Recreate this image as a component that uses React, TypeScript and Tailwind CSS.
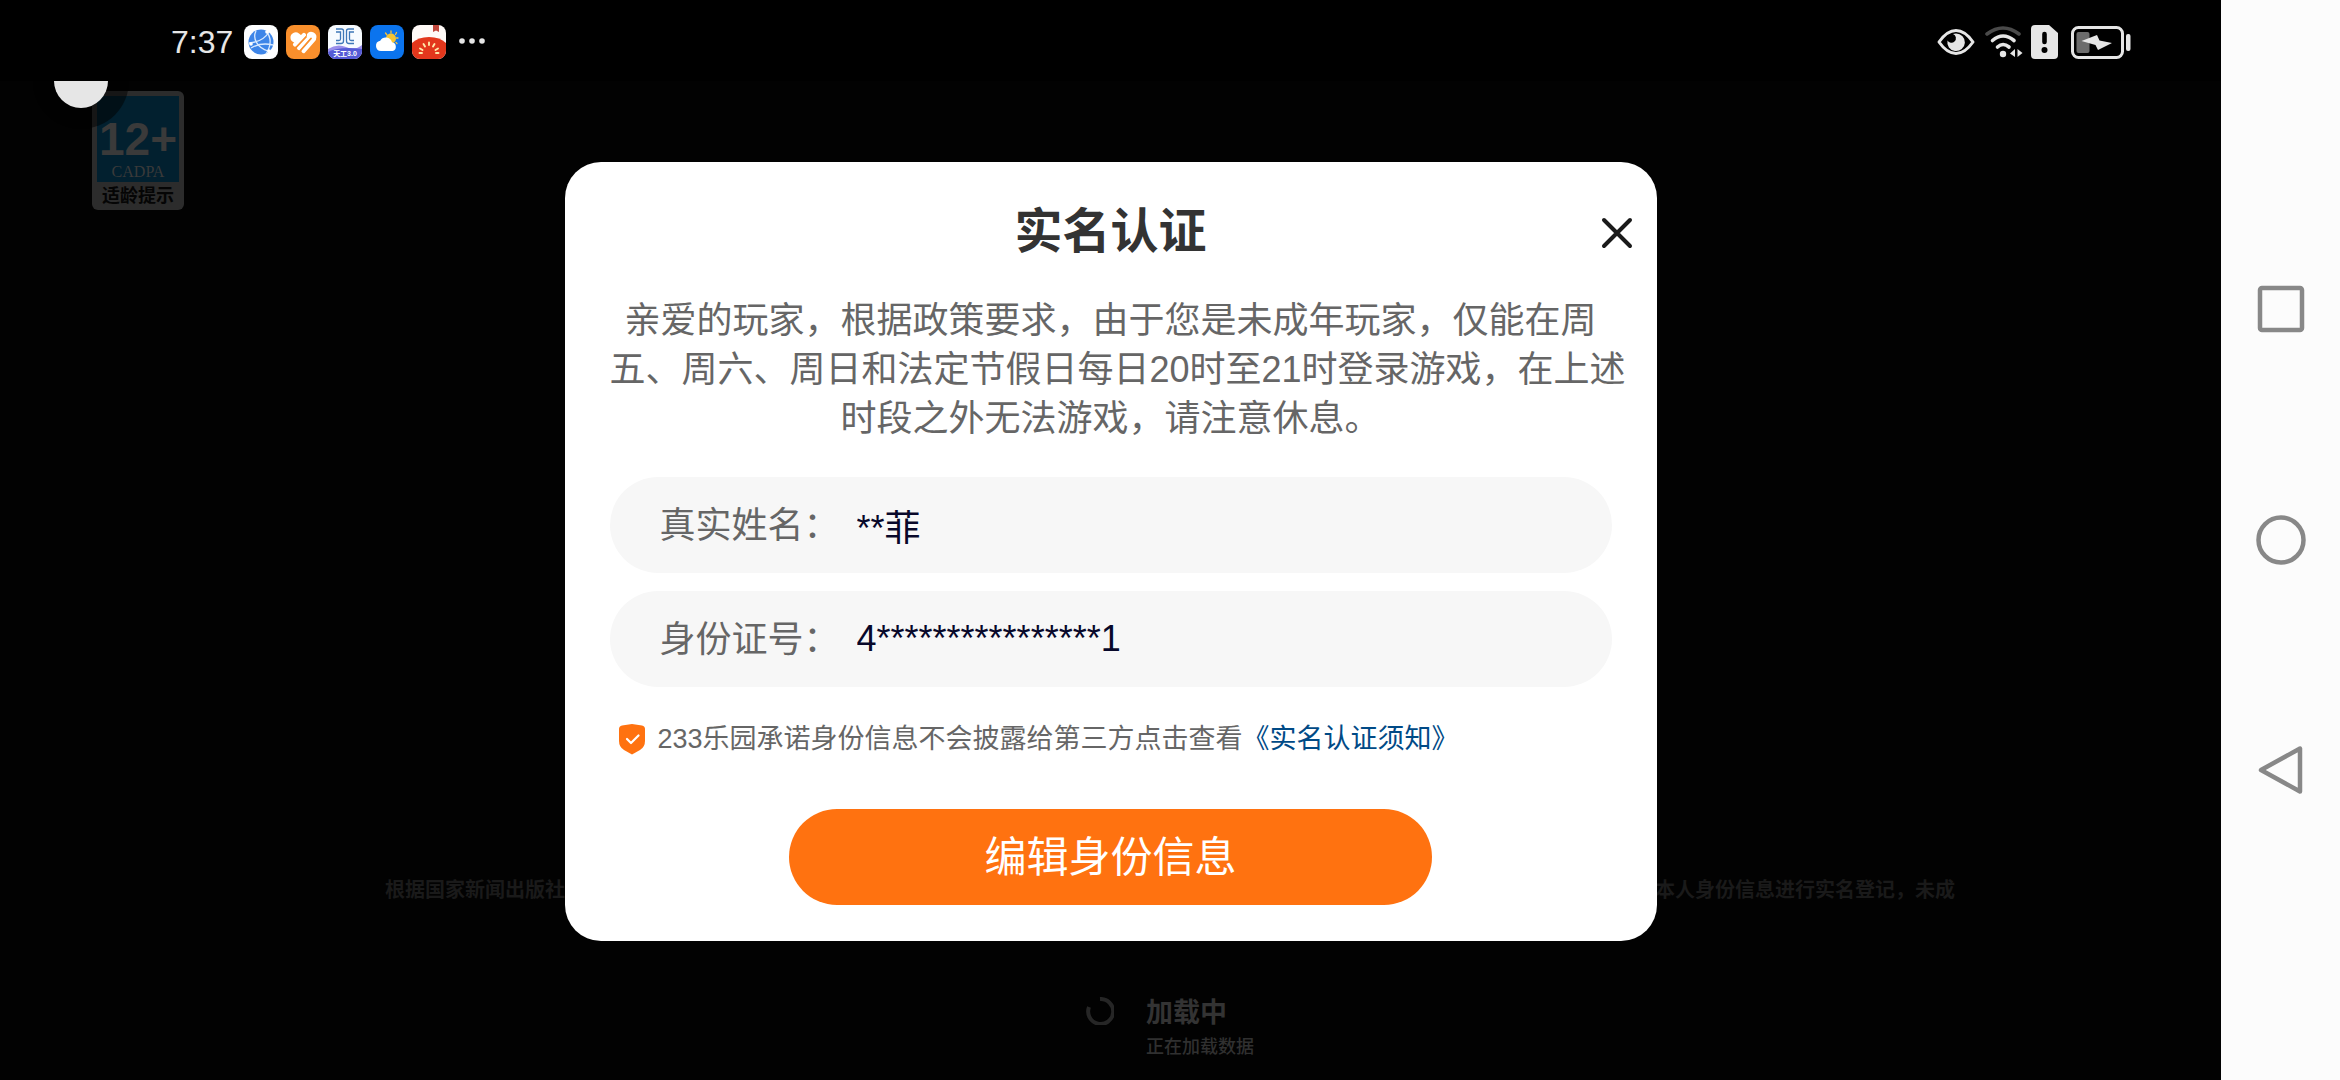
import { useState } from 'react';

const appIcons = [
  {
    name: '浏览器',
    art: (
      <>
        <rect width="34" height="34" rx="8" fill="#fdfeff" />
        <circle cx="17" cy="17" r="12.5" fill="#3d85e8" />
        <g fill="none" stroke="#d9eaff" strokeWidth="1.3">
          <path d="M5 18Q19 17 25 7" />
          <path d="M12 6C8 14 14 23 24 26" />
          <path d="M22 6C28 13 27 21 22 29" />
          <path d="M7 23Q17 17 29 20" />
        </g>
        <circle cx="23" cy="7" r="1.8" fill="#fff" />
        <circle cx="7" cy="19" r="1.8" fill="#fff" />
        <circle cx="25" cy="26" r="1.8" fill="#fff" />
      </>
    ),
  },
  {
    name: '运动健康',
    art: (
      <>
        <rect width="34" height="34" rx="8" fill="#f98f2c" />
        <path d="M4.5 13A5.2 5.2 0 0 1 13 8.5L15.5 10.5L8.5 17.5Q4.5 16 4.5 13z" fill="#fff" />
        <g fill="none" stroke="#fff" strokeWidth="4.2" strokeLinecap="round">
          <path d="M9 19.5L18 10" />
          <path d="M13 23L24 10.5" />
          <path d="M17.5 26L28 14" />
        </g>
        <path d="M21 9A5.2 5.2 0 0 1 30 14L26 14L21 12z" fill="#fff" />
        <path d="M10.500 22L20 12M14.5 25.5L25 13.5" stroke="#f98f2c" strokeWidth="1.8" strokeLinecap="round" />
      </>
    ),
  },
  {
    name: '天工',
    art: (
      <>
        <clipPath id="tg"><rect width="34" height="34" rx="8" /></clipPath>
        <g clipPath="url(#tg)">
          <rect width="34" height="34" fill="#f7fbff" />
          <g fill="none" stroke="#3f78b8" strokeWidth="1.3">
            <path d="M8 4H13.500Q15.500 4 15.500 6V16Q15.500 18.500 13 18.500H8" />
            <path d="M26 4H20.500Q18.500 4 18.500 6V16Q18.500 18.500 21 18.500H26" />
            <path d="M8 7H12.500V14Q12.500 15.500 11 15.500H8" />
            <path d="M26 7H21.500V14Q21.500 15.500 23 15.500H26" />
          </g>
          <path d="M0 24Q9 18 18 22T34 20V34H0z" fill="#9a8eea" />
          <path d="M0 27Q12 21 34 24V34H0z" fill="#555bd6" />
        </g>
        <text x="17" y="31" textAnchor="middle" fontSize="7" fontWeight="700" fill="#fff" fontFamily="'Liberation Sans', 'Noto Sans CJK SC', sans-serif">天工3.0</text>
      </>
    ),
  },
  {
    name: '天气',
    art: (
      <>
        <rect width="34" height="34" rx="8" fill="#0b74ee" />
        <g stroke="#f8c23c" strokeWidth="1.3" strokeLinecap="round">
          <path d="M21 6V8M26.5 7.5L25.5 9.5M15.5 8L17 10M28 13H26.5M27 18.5L26 17.5" />
        </g>
        <circle cx="21" cy="13.5" r="5" fill="#f8c531" />
        <path d="M11 26a5.2 5.2 0 0 1-.8-10.3A6.5 6.5 0 0 1 22 17.2a4.5 4.5 0 0 1 .5 8.8z" fill="#fff" />
      </>
    ),
  },
  {
    name: '番茄小说',
    art: (
      <>
        <clipPath id="fq"><rect width="34" height="34" rx="8" /></clipPath>
        <g clipPath="url(#fq)">
          <rect width="34" height="34" fill="#fffaf7" />
          <path d="M21 0H27V7L24 5.5L21 7z" fill="#c0473c" />
          <path d="M0 18Q6 12 17 12T34 18V34H0z" fill="#e3371c" />
          <g stroke="#ffe9a8" strokeWidth="1.9" strokeLinecap="round">
            <path d="M17 17.5V20M11.5 19L13 21.5M22.5 19L21 21.5M8 23.5L10.5 25M26 23.5L23.5 25M7.5 28H10M24 28H26.5" />
          </g>
        </g>
      </>
    ),
  },
];

function StatusBar() {
  return (
    <header className="flex h-[81px] items-center justify-between bg-black pt-[3px] pr-[90px] pl-[171px]">
      <div className="flex items-center gap-2">
        <time className="mr-[3px] font-['Liberation_Sans',sans-serif] text-[32px] leading-10 text-[#e6e6e6]">7:37</time>
        {appIcons.map((icon) => (
          <svg key={icon.name} role="img" aria-label={icon.name} viewBox="0 0 34 34" className="size-[34px]">
            {icon.art}
          </svg>
        ))}
        <svg viewBox="0 0 28 8" className="ml-1 h-2 w-7" fill="#e6e6e6" aria-hidden="true">
          <circle cx="4" cy="3" r="2.8" />
          <circle cx="14" cy="3" r="2.8" />
          <circle cx="24" cy="3" r="2.8" />
        </svg>
      </div>

      <div className="flex items-center">
        <svg viewBox="0 0 38 28" className="mr-[10px] h-7 w-[38px]" aria-hidden="true">
          <path d="M2 14Q10 2.5 19 2.5T36 14Q28 25.5 19 25.5T2 14z" fill="none" stroke="#e6e6e6" strokeWidth="3" strokeLinejoin="round" />
          <path d="M19 5.5A8.8 8.8 0 1 1 10.5 12.5A4.5 4.5 0 0 0 17.5 13.5A4.5 4.5 0 0 0 16 6z" fill="#e6e6e6" />
        </svg>
        <svg viewBox="0 0 38 34" className="mr-2 h-[34px] w-[38px]" fill="none" strokeLinecap="round" strokeWidth="3.6" aria-hidden="true">
          <path d="M2 9Q18 -3 34 9" stroke="#4a4a4a" />
          <path d="M7.5 15.5Q18 6.5 29 15.5" stroke="#e6e6e6" />
          <path d="M12.5 22Q18 17 24 22" stroke="#e6e6e6" />
          <circle cx="18" cy="29" r="3.2" fill="#e6e6e6" />
          <path d="M30 24V32L25 28.5zM32.5 24V32L37.5 28z" fill="#e6e6e6" />
        </svg>
        <svg viewBox="0 0 27 34" className="mr-[13px] h-[34px] w-[27px]" aria-hidden="true">
          <path d="M4 0H18L27 8V30a4 4 0 0 1-4 4H4a4 4 0 0 1-4-4V4a4 4 0 0 1 4-4z" fill="#e6e6e6" />
          <path d="M13.5 9V17" stroke="#000" strokeWidth="4.6" strokeLinecap="round" />
          <circle cx="13.5" cy="25" r="3" fill="#000" />
        </svg>
        <svg viewBox="0 0 60 34" className="h-[34px] w-[60px]" aria-hidden="true">
          <rect x="1.5" y="2.5" width="50" height="30" rx="6" fill="none" stroke="#e6e6e6" strokeWidth="3" />
          <rect x="5.5" y="7" width="13" height="21" rx="2" fill="#6c6c6c" />
          <path d="M10.5 16L26 10L28.5 15.5L41 18L27 25L24.5 20z" fill="#e6e6e6" />
          <rect x="55" y="9" width="4.5" height="17" rx="2" fill="#e6e6e6" />
        </svg>
      </div>
    </header>
  );
}

function AgeBadge() {
  return (
    <div className="flex h-[119px] w-[92px] flex-col overflow-hidden rounded-md bg-[#2c2c2c] p-[5px] pb-1 text-center">
      <div className="flex h-[86px] shrink-0 flex-col items-center justify-end bg-[#02202f] text-[#3a3a3a]">
        <span className="font-['Liberation_Sans',sans-serif] text-[46px] leading-[46px] font-bold">12+</span>
        <span className="font-['Liberation_Serif',serif] text-base leading-5">CADPA</span>
      </div>
      <span className="font-['Noto_Sans_CJK_SC',sans-serif] text-lg leading-6 font-bold text-[#050505]">适龄提示</span>
    </div>
  );
}

export default function App() {
  const [open, setOpen] = useState(true);
  const [realName, setRealName] = useState('**菲');
  const [idNumber, setIdNumber] = useState('4****************1');
  const [editing, setEditing] = useState(false);

  const fields = [
    { id: 'real-name', label: '真实姓名：', value: realName, onChange: setRealName },
    { id: 'id-number', label: '身份证号：', value: idNumber, onChange: setIdNumber },
  ];

  return (
    <div className="flex min-h-screen bg-[#020202]">
      <div className="flex min-w-0 flex-1 flex-col">
        <StatusBar />

        <main className="relative flex flex-1 flex-col justify-between overflow-hidden">
          <div className="pt-[10px] pl-[92px]">
            <AgeBadge />
          </div>

          {/* Floating assistant ball */}
          <div className="absolute -top-12 left-[33px] flex size-24 items-center justify-center rounded-full bg-black/50">
            <div className="size-[54px] rounded-full bg-[#e6e6e6]" />
          </div>

          {/* Loading screen */}
          <div className="flex flex-col items-center pb-[23px] pl-[119px] font-['Noto_Sans_CJK_SC',sans-serif]">
            <p className="mb-[90px] flex w-full max-w-[1570px] justify-between text-xl leading-7 font-bold text-[#1a1a1a]">
              <span>根据国家新闻出版社</span>
              <span>用本人身份信息进行实名登记，未成</span>
            </p>
            <div className="flex gap-8">
              <svg viewBox="0 0 28 28" className="mt-1 size-7" fill="none" aria-hidden="true">
                <path d="M14 2A12.5 12.5 0 1 1 3 10" stroke="#262626" strokeWidth="4" />
              </svg>
              <div className="flex flex-col gap-1">
                <p className="text-[27px] leading-9 font-bold text-[#333333]">加载中</p>
                <p className="text-lg leading-6 font-medium text-[#303030]">正在加载数据</p>
              </div>
            </div>
          </div>

          {/* Real-name dialog */}
          {open && (
            <div className="absolute inset-0 flex items-start justify-center pt-[81px] font-['Liberation_Sans','Noto_Sans_CJK_SC',sans-serif]">
              <section
                role="dialog"
                aria-labelledby="dialog-title"
                className="relative w-full max-w-[1092px] rounded-[36px] bg-white px-[45px] py-9"
              >
                <h1 id="dialog-title" className="text-center text-5xl leading-[68px] font-bold text-[#333333]">实名认证</h1>
                <button
                  type="button"
                  aria-label="关闭"
                  onClick={() => setOpen(false)}
                  className="absolute top-[47px] right-4 flex size-12 cursor-pointer items-center justify-center"
                >
                  <svg viewBox="0 0 32 32" className="size-8" fill="none" stroke="#1a1a1a" strokeWidth="4" strokeLinecap="round">
                    <path d="M3 3L29 29M29 3L3 29" />
                  </svg>
                </button>

                <p className="mt-[30px] text-center text-4xl leading-[49px] whitespace-nowrap text-[#666666]">
                  亲爱的玩家，根据政策要求，由于您是未成年玩家，仅能在周
                  <br />
                  五、周六、周日和法定节假日每日20时至21时登录游戏，在上述
                  <br />
                  时段之外无法游戏，请注意休息。
                </p>

                <form className="mt-[34px] flex flex-col" onSubmit={(e) => e.preventDefault()}>
                  <div className="flex flex-col gap-[18px]">
                    {fields.map((field) => (
                      <div key={field.id} className="flex h-24 items-center rounded-full bg-[#f7f7f7] px-[50px]">
                        <label htmlFor={field.id} className="w-[197px] pt-[2px] text-4xl text-[#666666]">
                          {field.label}
                        </label>
                        <input
                          id={field.id}
                          type="text"
                          readOnly={!editing}
                          value={field.value}
                          onChange={(e) => field.onChange(e.target.value)}
                          className="h-14 min-w-0 flex-1 bg-transparent text-4xl text-[#08082a] outline-none"
                        />
                      </div>
                    ))}
                  </div>

                  <div className="mt-[34px] flex items-center pl-2 text-[27px] leading-9 text-[#666666]">
                    <svg viewBox="0 0 28 32" className="mr-3 h-8 w-7" aria-hidden="true">
                      <path d="M14 1L24 2.5Q27 3 27 6V18Q27 24 22 27L14 31.5L6 27Q1 24 1 18V6Q1 3 4 2.5z" fill="#ff7210" />
                      <path d="M9 16L13 20L20.5 12.5" fill="none" stroke="#fff" strokeWidth="2.2" strokeLinecap="round" strokeLinejoin="round" />
                    </svg>
                    <p>
                      233乐园承诺身份信息不会披露给第三方点击查看
                      <a href="#notice" className="text-[#004a86]">《实名认证须知》</a>
                    </p>
                  </div>

                  <button
                    type="button"
                    onClick={() => setEditing(true)}
                    className="mx-auto mt-[52px] h-24 w-full max-w-[643px] cursor-pointer rounded-full bg-[#ff7210] text-[42px] text-white"
                  >
                    编辑身份信息
                  </button>
                </form>
              </section>
            </div>
          )}
        </main>
      </div>

      {/* System navigation keys */}
      <nav className="flex w-[119px] shrink-0 flex-col items-center justify-center gap-[181px] bg-[#fcfcfc]">
        <button type="button" aria-label="最近任务" className="cursor-pointer">
          <svg viewBox="0 0 50 50" className="size-[50px]" fill="none" stroke="#888888" strokeWidth="4.5">
            <rect x="4" y="4" width="42" height="42" rx="2" />
          </svg>
        </button>
        <button type="button" aria-label="主页" className="cursor-pointer">
          <svg viewBox="0 0 50 50" className="size-[50px]" fill="none" stroke="#888888" strokeWidth="4.5">
            <circle cx="25" cy="25" r="22.5" />
          </svg>
        </button>
        <button type="button" aria-label="返回" className="cursor-pointer">
          <svg viewBox="0 0 50 50" className="size-[50px]" fill="none" stroke="#888888" strokeWidth="4.5" strokeLinejoin="round">
            <path d="M5 24L44 2.5V45.5z" />
          </svg>
        </button>
      </nav>
    </div>
  );
}
